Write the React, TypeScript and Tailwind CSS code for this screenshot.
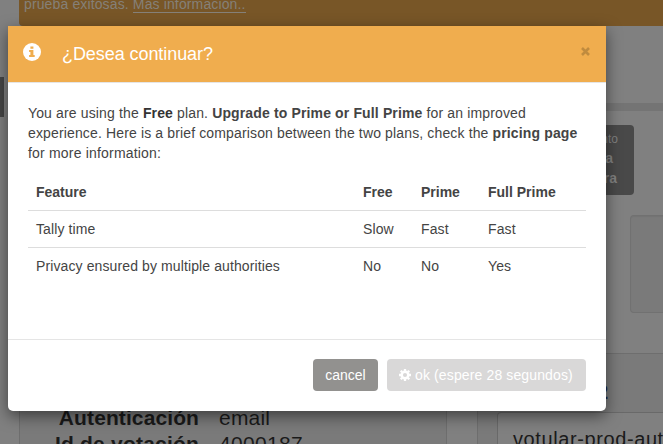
const rows = [
  ["Tally time", "Slow", "Fast", "Fast"],
  ["Privacy ensured by multiple authorities", "No", "No", "Yes"],
];

function InfoIcon() {
  return (
    <svg className="mt-[17px] size-[18px]" viewBox="0 0 18 18">
      <circle cx="9" cy="9" r="9" fill="#fff" />
      <path d="M7.4 3.4h3v2.4h-3zM6.1 7.1h4.3v5h1.3v1.8H6.1v-1.8h1.3V8.9H6.1z" fill="#f0ad4e" />
    </svg>
  );
}

function GearIcon() {
  return (
    <svg className="size-3" viewBox="0 0 12 12" stroke="#fff" fill="none">
      <circle cx="6" cy="6" r="3.3" strokeWidth="2.5" />
      <path
        d="M6 0v2M6 10v2M0 6h2M10 6h2M1.76 1.76l1.4 1.4M8.84 8.84l1.4 1.4M10.24 1.76l-1.4 1.4M3.16 8.84l-1.4 1.4"
        strokeWidth="2.3"
      />
    </svg>
  );
}

function Page() {
  return (
    <div className="flex h-[444px] w-[663px]">
      <div className="w-1 shrink-0 pt-[77px]">
        <div className="h-10 bg-[#464646]" />
      </div>
      <div className="flex min-w-0 flex-1 flex-col">
        <div className="ml-[15px] h-[26px] shrink-0 rounded-bl bg-[#785627] pl-[5px] text-[14px] leading-5 tracking-[0.13px] text-[#858078]">
          <p className="-mt-[6px] whitespace-nowrap">
            prueba exitosas. <span className="border-b border-[#858078]">Más información..</span>
          </p>
        </div>
        <div className="ml-[15px] mt-[77px] h-2 shrink-0 bg-[#747474]" />
        <div className="flex h-[242px] shrink-0 flex-col items-end">
          <div className="mr-[29px] mt-[14px] h-[70px] w-[94px] shrink-0 rounded bg-[#494949] pr-4 pt-1 text-right text-[12px] leading-5 text-[#808080]">
            <div>nto</div>
            <div className="pr-[5px] text-[14px] font-bold leading-[19px]">a</div>
            <div className="pr-[1px] text-[14px] font-bold leading-5">ra</div>
          </div>
          <div className="mt-5 h-[98px] w-[33px] shrink-0 rounded-l border border-r-0 border-[#717171] bg-[#7a7a7a] shadow-[inset_0_1px_1px_rgba(0,0,0,0.05)]" />
        </div>
        <div className="ml-[15px] flex flex-1 gap-[30px]">
          <div className="w-[428px] shrink-0 border-x border-[#6e6e6e] bg-[#7a7a7a] pt-[52px] text-[21px] leading-[26px] tracking-[0.2px] text-[#1a1a1a]">
            <div className="flex whitespace-nowrap">
              <b className="w-[179px] text-right tracking-[0.1px]">Autenticación</b>
              <span className="ml-5">email</span>
            </div>
            <div className="flex whitespace-nowrap">
              <b className="w-[179px] text-right">Id de votación</b>
              <span className="ml-5 tracking-[0.3px]">4000187</span>
            </div>
          </div>
          <div className="min-w-0 flex-1 border-l border-t border-[#6e6e6e] bg-[#7a7a7a]">
            <div className="h-[58px] pt-[26px] text-[20px] font-bold leading-6 text-[#182348]">
              <span className="block w-[130px] text-right">2</span>
            </div>
            <div className="ml-[19px] h-10 rounded-tl border-l border-t border-[#696969] bg-[#808080] pl-[15px] pt-[14px] text-[20px] leading-6 tracking-[0.6px] text-[#1a1a1a]">
              <span className="whitespace-nowrap">votular-prod-aut</span>
            </div>
          </div>
        </div>
      </div>
    </div>
  );
}

function Dialog() {
  return (
    <div className="absolute left-2 top-[26px] flex h-[385px] w-[598px] flex-col overflow-hidden rounded-b-[5px] bg-white shadow-[0_5px_15px_rgba(0,0,0,0.5)]">
      <header className="flex h-[57px] shrink-0 items-start border-b border-[#e5e5e5] bg-[#f0ad4e] px-[15px] text-white">
        <InfoIcon />
        <h4 className="ml-[21px] mt-[16px] text-[18px] leading-6 tracking-[-0.07px]">¿Desea continuar?</h4>
        <svg className="ml-auto mr-[1px] mt-[21px] size-[9px]" viewBox="0 0 9 9" fill="none" stroke="#c08b3e" strokeWidth="2.6">
          <path d="M1 1l7 7M8 1L1 8" />
        </svg>
      </header>
      <div className="h-[256px] shrink-0 px-5 pt-5 text-[14px] leading-5 text-[#444]">
        <p className="whitespace-nowrap tracking-[0.14px]">
          You are using the <b className="text-[#333]">Free</b> plan. <b>Upgrade to Prime or Full Prime</b> for an improved
          <br />
          experience. Here is a brief comparison between the two plans, check the <b>pricing page</b>
          <br />
          <span className="tracking-[0.19px]">for more information:</span>
        </p>
        <table className="mt-[10px] w-[558px] table-fixed text-left">
          <colgroup>
            <col className="w-[327px]" />
            <col className="w-[58px]" />
            <col className="w-[67px]" />
            <col />
          </colgroup>
          <thead>
            <tr className="h-[37px]">
              {["Feature", "Free", "Prime", "Full Prime"].map((title) => (
                <th key={title} className="px-2 pt-0.5">{title}</th>
              ))}
            </tr>
          </thead>
          <tbody>
            {rows.map((row) => (
              <tr key={row[0]} className="h-[37px] border-t border-[#ddd]">
                {row.map((cell, i) => (
                  <td key={i} className="whitespace-nowrap px-2 tracking-[0.11px]">{cell}</td>
                ))}
              </tr>
            ))}
          </tbody>
        </table>
      </div>
      <footer className="flex flex-1 items-start justify-end gap-[9px] border-t border-[#e5e5e5] pr-5 pt-[19px] text-[14px] text-white">
        <button className="h-8 w-[65px] rounded bg-[#92918f]">cancel</button>
        <button className="flex h-8 w-[199px] items-center gap-1 whitespace-nowrap rounded bg-[#d9d8d8] pl-3 tracking-[0.13px]">
          <GearIcon />
          ok (espere 28 segundos)
        </button>
      </footer>
    </div>
  );
}

export default function App() {
  return (
    <main className="relative h-[444px] w-[663px] overflow-hidden bg-[#808080] font-['Liberation_Sans',Arial,sans-serif]">
      <Page />
      <Dialog />
    </main>
  );
}
